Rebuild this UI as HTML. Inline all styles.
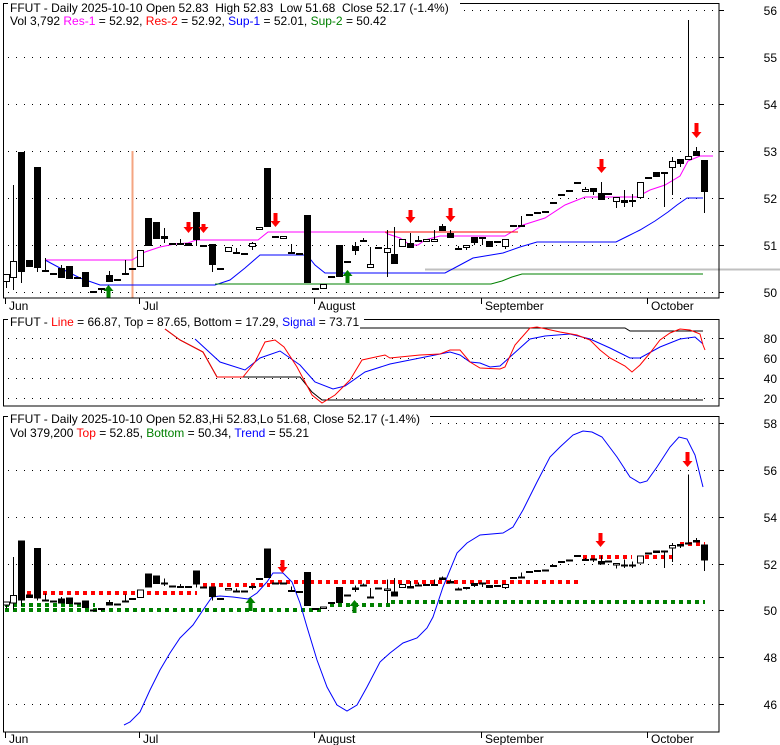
<!DOCTYPE html>
<html><head><meta charset="utf-8">
<style>
html,body{margin:0;padding:0;background:#fff;width:780px;height:745px;overflow:hidden}
svg{display:block}
text{font-family:"Liberation Sans",Arial,sans-serif;font-size:12px;fill:#000}
</style></head>
<body>
<svg id="s" width="780" height="745" xmlns="http://www.w3.org/2000/svg">
<g id="grid"></g>
<g id="lines"></g>
<g id="candles"></g>
<g id="arrows"></g>
<g id="frame" fill="none" stroke="#000" stroke-width="1">
<rect x="3.5" y="3.5" width="715.5" height="294.5"/>
<rect x="3.5" y="319.5" width="715.5" height="86.5"/>
<rect x="3.5" y="416.5" width="715.5" height="315.5"/>
</g>
<g id="labels"></g>
<g id="titles">
<rect x="8" y="0" width="452" height="13" fill="#fff"/>
<text x="10" y="12" xml:space="preserve">FFUT - Daily 2025-10-10 Open 52.83  High 52.83  Low 51.68  Close 52.17 (-1.4%)</text>
<text x="10" y="25">Vol 3,792 <tspan fill="#ff00ff">Res-1</tspan> = 52.92, <tspan fill="#ff0000">Res-2</tspan> = 52.92, <tspan fill="#0000ff">Sup-1</tspan> = 52.01, <tspan fill="#008000">Sup-2</tspan> = 50.42</text>
<rect x="8" y="313" width="356" height="14" fill="#fff"/>
<text x="10" y="326">FFUT - <tspan fill="#ff0000">Line</tspan> = 66.87, Top = 87.65, Bottom = 17.29, <tspan fill="#0000ff">Signal</tspan> = 73.71</text>
<rect x="8" y="410" width="422" height="14" fill="#fff"/>
<text x="10" y="423">FFUT - Daily 2025-10-10 Open 52.83,Hi 52.83,Lo 51.68, Close 52.17 (-1.4%)</text>
<text x="10" y="437">Vol 379,200 <tspan fill="#ff0000">Top</tspan> = 52.85, <tspan fill="#008000">Bottom</tspan> = 50.34, <tspan fill="#0000ff">Trend</tspan> = 55.21</text>
</g>
</svg>
<script>
var NS="http://www.w3.org/2000/svg";
function el(p,t,a){var e=document.createElementNS(NS,t);for(var k in a)e.setAttribute(k,a[k]);document.getElementById(p).appendChild(e);return e;}
function pl(p,pts,c,w,extra){var a={points:pts.map(function(q){return q[0]+","+q[1]}).join(" "),fill:"none",stroke:c,"stroke-width":w||1};for(var k in extra)a[k]=extra[k];return el(p,"polyline",a);}
function grid(ys,labs){ys.forEach(function(y,i){
 el("grid","line",{x1:8,x2:716,y1:y+0.5,y2:y+0.5,stroke:"#000","stroke-dasharray":"1 7"});
 el("frame","line",{x1:719,x2:724,y1:y+0.5,y2:y+0.5,stroke:"#000"});
 var t=el("labels","text",{x:777,y:y+5,"text-anchor":"end"});t.textContent=labs[i];});}
grid([10,57,104,151,198,245,292],["56","55","54","53","52","51","50"]);
grid([338,358,378,398],["80","60","40","20"]);
grid([423,470,517,564,610,657,704],["58","56","54","52","50","48","46"]);
[[5,"Jun"],[139,"Jul"],[314,"August"],[481,"September"],[647,"October"]].forEach(function(m){
 [[298,310],[732,743]].forEach(function(r){
  el("frame","line",{x1:m[0]+0.5,x2:m[0]+0.5,y1:r[0],y2:r[0]+6,stroke:"#000"});
  var t=el("labels","text",{x:m[0]+4,y:r[1]});t.textContent=m[1];});});
el("lines","line",{x1:132.5,x2:132.5,y1:151,y2:298,stroke:"#f4a582","stroke-width":2});
el("lines","line",{x1:425,x2:780,y1:269.5,y2:269.5,stroke:"#c0c0c0","stroke-width":2});
pl("lines",[[45,260],[132,260],[145,252],[160,247],[175,244],[188,243],[196,240],[258,240],[268,232],[385,232],[388,234],[400,238],[410,245],[418,245],[425,240],[440,236],[505,236],[515,230],[523,225],[545,218],[565,205],[585,197],[637,197],[650,190],[665,185],[680,176],[688,161],[700,156],[713,156]],"#ff00ff");
pl("lines",[[385,232],[518,232]],"#ff0000");
pl("lines",[[45,260],[60,268],[80,278],[100,285],[215,285],[230,280],[245,268],[260,255],[307,255],[315,265],[325,273],[445,273],[460,265],[473,258],[503,253],[520,247],[537,242],[616,242],[628,236],[640,230],[655,221],[668,212],[677,205],[687,198],[703,198]],"#0000ff");
pl("lines",[[215,284],[491,284],[502,281],[512,277],[522,274],[703,274]],"#008000");
pl("lines",[[165,329],[180,340],[203,352],[217,377],[300,377],[312,392],[322,400],[703,400]],"#000");
pl("lines",[[360,328],[625,328],[630,331],[703,331]],"#000");
pl("lines",[[195,339],[220,362],[245,370],[260,358],[280,351],[300,365],[315,382],[333,389],[345,386],[365,372],[390,364],[420,358],[450,352],[460,355],[470,362],[480,363],[490,367],[500,366],[510,357],[530,339],[545,336],[570,334],[590,339],[610,348],[630,358],[640,358],[660,347],[680,339],[695,337],[703,344]],"#0000ff");
pl("lines",[[165,329],[180,340],[203,352],[217,377],[243,377],[255,362],[265,342],[275,340],[284,347],[297,367],[312,395],[322,403],[335,395],[350,380],[362,360],[385,355],[390,358],[420,355],[440,354],[450,350],[460,350],[470,362],[480,368],[500,369],[505,367],[515,345],[530,328],[537,327],[560,332],[577,335],[590,340],[600,350],[610,358],[625,366],[632,372],[640,365],[650,353],[660,340],[670,333],[680,329],[690,330],[700,334],[703,345],[705,350]],"#ff0000");
var dot={"stroke-dasharray":"4 4"};
pl("lines",[[5,610],[325,610]],"#008000",4,dot);
pl("lines",[[5,605],[95,605]],"#008000",4,dot);
pl("lines",[[330,605],[390,605],[390,602],[705,602]],"#008000",4,dot);
pl("lines",[[27,593],[197,593]],"#ff0000",4,dot);
pl("lines",[[203,585],[270,585]],"#ff0000",4,dot);
pl("lines",[[270,582],[578,582]],"#ff0000",4,dot);
pl("lines",[[583,557],[632,557]],"#ff0000",4,dot);
pl("lines",[[645,557],[673,557]],"#ff0000",4,dot);
pl("lines",[[680,544],[705,544]],"#ff0000",4,dot);
pl("lines",[[124,725],[130,722],[140,712],[150,690],[160,670],[170,653],[180,638],[193,625],[203,610],[212,597],[220,596],[233,597],[248,599],[257,593],[267,582],[273,573],[283,573],[292,582],[300,603],[307,627],[317,660],[327,687],[337,705],[347,711],[357,705],[367,687],[380,662],[390,653],[403,643],[417,638],[427,628],[433,617],[443,587],[457,553],[467,543],[480,535],[503,533],[513,527],[523,510],[537,482],[550,457],[560,447],[573,435],[583,431],[592,432],[602,437],[617,457],[630,477],[640,483],[647,481],[657,467],[670,447],[679,437],[687,439],[695,455],[703,487]],"#0000ff");
var C=[[6,274,282,274,288,'h'],[13,261,278,185,290,'h'],[21,152,272,152,283,'b'],[29,260,267,260,267,'b'],[37,167,268,167,272,'b'],[45,270,272,258,272,'b'],[53,274,274,274,274,'d'],[61,268,278,265,278,'b'],[69,266,279,266,279,'b'],[77,278,278,278,278,'d'],[85,272,287,272,287,'b'],[93,292,292,292,292,'d'],[101,289,289,289,293,'d'],[109,275,282,271,282,'b'],[117,280,280,280,280,'d'],[125,274,274,260,274,'d'],[132,269,269,269,269,'d'],[140,250,267,250,267,'h'],[148,218,246,218,246,'b'],[156,222,239,222,239,'b'],[164,236,239,228,243,'b'],[172,244,244,244,244,'d'],[180,243,245,239,245,'b'],[188,243,246,243,246,'b'],[196,212,240,212,246,'b'],[203,246,246,246,246,'d'],[212,244,265,244,272,'b'],[220,269,269,269,269,'d'],[228,247,252,247,252,'h'],[236,252,254,248,254,'b'],[244,254,254,254,254,'d'],[252,243,247,242,250,'h'],[259,227,230,227,230,'h'],[267,168,227,168,227,'b'],[275,236,238,236,238,'b'],[283,236,239,236,239,'h'],[291,253,253,244,253,'d'],[299,253,255,253,255,'h'],[307,215,283,215,283,'b'],[315,289,289,289,289,'d'],[323,284,289,284,289,'h'],[331,277,277,277,277,'d'],[339,245,277,245,277,'b'],[347,262,262,262,262,'d'],[355,246,251,242,255,'b'],[363,240,242,238,242,'h'],[370,264,268,247,268,'h'],[378,248,248,248,248,'d'],[387,248,253,230,277,'h'],[394,254,264,227,264,'b'],[402,239,247,239,247,'h'],[410,243,248,233,248,'b'],[418,240,242,236,242,'b'],[426,239,242,239,242,'h'],[434,239,242,230,242,'h'],[442,226,231,224,231,'b'],[450,233,238,230,238,'b'],[458,248,250,246,250,'h'],[466,245,248,245,250,'h'],[474,237,243,237,245,'b'],[482,238,238,238,245,'d'],[489,241,247,241,247,'b'],[497,241,243,241,243,'h'],[505,239,247,239,249,'h'],[513,225,227,225,227,'h'],[521,226,226,216,226,'d'],[529,215,215,215,215,'d'],[537,213,213,213,213,'d'],[545,212,212,212,212,'d'],[553,203,203,203,203,'d'],[561,195,195,195,195,'d'],[569,190,192,190,192,'b'],[577,183,183,183,183,'d'],[585,189,192,187,192,'h'],[593,188,192,188,195,'b'],[601,193,200,182,200,'b'],[608,194,194,194,194,'d'],[616,197,202,197,208,'h'],[624,200,203,190,207,'b'],[632,200,202,194,207,'b'],[640,182,198,182,198,'h'],[648,178,178,178,178,'d'],[656,172,177,172,177,'b'],[664,172,174,172,207,'h'],[672,161,168,157,195,'h'],[680,159,164,159,167,'b'],[688,156,160,20,160,'h'],[696,151,156,147,156,'b'],[704,160,192,160,213,'b']];
function candle(c,f){var x=c[0],t=f(c[1]),b=f(c[2]),wt=f(c[3]),wb=f(c[4]);
 if(wb-wt>0.5)el("candles","line",{x1:x+0.5,x2:x+0.5,y1:wt,y2:wb,stroke:"#000"});
 if(c[5]=='d'){el("candles","rect",{x:x-3,y:t-1,width:7,height:2,fill:"#000"});}
 else if(c[5]=='b'){el("candles","rect",{x:x-3,y:t,width:7,height:Math.max(b-t,2),fill:"#000"});}
 else{el("candles","rect",{x:x-2.5,y:t+0.5,width:6,height:Math.max(b-t-1,1),fill:"#fff",stroke:"#000"});}}
C.forEach(function(c){candle(c,function(y){return y});candle(c,function(y){return 464.5+y/2});});
function arrow(x,y1,y2,col,up){var h=y2-y1,d;
 if(!up)d="M"+(x-1.5)+","+y1+"h4v"+(h-6)+"h3l-5,6l-5,-6h3z";
 else d="M"+(x-1.5)+","+y2+"h4v"+(-(h-6))+"h3l-5,-6l-5,6h3z";
 el("arrows","path",{d:d,fill:col});}
[[188,222,233],[203,224,233],[275,213,227],[410,210,223],[450,208,222],[601,159,173],[696,123,138],[282,560,573],[600,533,547],[687,452,467]].forEach(function(a){arrow(a[0],a[1],a[2],"#ff0000",false)});
[[108,285,298],[347,270,283],[250,597,611],[354,600,613]].forEach(function(a){arrow(a[0],a[1],a[2],"#008000",true)});
</script>
</body></html>
